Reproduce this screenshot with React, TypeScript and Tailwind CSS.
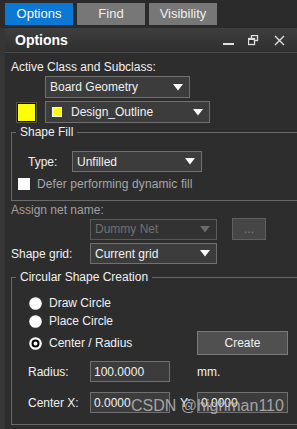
import React from "react";

const font = { fontFamily: '"Liberation Sans", Arial, sans-serif' };

function Arrow({ disabled }: { disabled?: boolean }) {
  return (
    <svg width="10" height="7" viewBox="0 0 10 7" className="shrink-0">
      <polygon points="0,0 10,0 5,6.5" fill={disabled ? "#6a6a6a" : "#ffffff"} />
    </svg>
  );
}

function Dropdown({
  w,
  h = 22,
  text,
  disabled,
  swatch,
}: {
  w: string;
  h?: number;
  text: string;
  disabled?: boolean;
  swatch?: boolean;
}) {
  return (
    <div
      className={`${w} flex items-center justify-between border pl-[4px] pr-[6px] ${
        disabled ? "border-[#5a5a5a] bg-[#323232] text-[#707070]" : "border-[#707070] bg-[#3c3c3c] text-[#f0f0f0]"
      }`}
      style={{ height: h }}
    >
      <div className="flex items-center">
        {swatch && <div className="mr-[9px] ml-[2px] h-[10px] w-[10px] border border-white bg-[#ffff00]" />}
        <span>{text}</span>
      </div>
      <Arrow disabled={disabled} />
    </div>
  );
}

function Radio({ label, checked }: { label: string; checked?: boolean }) {
  return (
    <div className="flex h-[16px] items-center">
      <svg width="13" height="13" viewBox="0 0 13 13" className="ml-[17px] mr-[7px]">
        <circle cx="6.5" cy="6.5" r="6.3" fill="#ffffff" />
        {checked && <circle cx="6.5" cy="6.5" r="3" fill="#ffffff" stroke="#000" strokeWidth="2" />}
      </svg>
      <span className="text-[#f0f0f0]">{label}</span>
    </div>
  );
}

export default function App() {
  return (
    <div className="relative h-[429px] w-[297px] overflow-hidden bg-[#2d2d2d] text-[12px] leading-[16px]" style={font}>
      {/* Tabs */}
      <div className="flex h-[28px] gap-[4px] bg-[#2b2b2b] pl-[5px] pt-[3px]">
        <div className="flex h-[22px] w-[68px] items-center justify-center bg-[#0a78d4] text-[13px] text-white">Options</div>
        <div className="flex h-[22px] w-[68px] items-center justify-center bg-[#777777] text-[13px] text-[#eeeeee]">Find</div>
        <div className="flex h-[22px] w-[68px] items-center justify-center bg-[#777777] text-[13px] text-[#eeeeee]">Visibility</div>
      </div>
      <div className="flex">
        <div className="h-[401px] w-[5px] shrink-0 bg-[#363636]" />
        <div className="flex min-w-0 flex-1 flex-col overflow-hidden">
          {/* Header */}
          <div className="flex h-[25px] items-center justify-between border-b border-[#4a4a4a] bg-gradient-to-b from-[#3e3e3e] to-[#2f2f2f] pl-[10px] pr-[12px]">
            <span className="text-[14px] font-bold text-white">Options</span>
            <div className="flex items-center gap-[13px]">
              <svg width="12" height="12" viewBox="0 0 12 12">
                <rect x="0" y="9" width="11" height="2" fill="#e0e0e0" />
              </svg>
              <svg width="11" height="11" viewBox="0 0 11 11">
                <rect x="3.5" y="0.5" width="6" height="5" fill="none" stroke="#e0e0e0" strokeWidth="1.3" />
                <rect x="0.5" y="3.5" width="6" height="6" fill="#2f2f2f" stroke="#e0e0e0" strokeWidth="1.3" />
                <rect x="0.5" y="3.5" width="6" height="1.5" fill="#e0e0e0" />
              </svg>
              <svg width="11" height="11" viewBox="0 0 11 11" className="ml-[2px]">
                <path d="M1 1 L10 10 M10 1 L1 10" stroke="#e0e0e0" strokeWidth="1.4" />
              </svg>
            </div>
          </div>

          {/* Body */}
          <div className="flex flex-col">
            <div className="mt-[6px] pl-[6px] text-[#f0f0f0]">Active Class and Subclass:</div>
            <div className="mt-[1px] pl-[40px]">
              <Dropdown w="w-[145px]" text="Board Geometry" />
            </div>
            <div className="mt-[3px] flex items-center">
              <div className="ml-[12px] h-[19px] w-[19px] border border-[#111] bg-[#ffff00] outline outline-1 outline-[#555]" />
              <div className="ml-[9px]">
                <Dropdown w="w-[165px]" text="Design_Outline" swatch />
              </div>
            </div>

            <fieldset className="ml-[6px] mt-[1px] w-[300px] border border-[#6a6a6a] pb-[8px]">
              <legend className="ml-[4px] px-[4px] text-[#f0f0f0]">Shape Fill</legend>
              <div className="mt-[11px] flex items-center">
                <span className="ml-[16px] w-[44px] text-[#f0f0f0]">Type:</span>
                <Dropdown w="w-[130px]" h={21} text="Unfilled" />
              </div>
              <div className="mt-[4px] flex items-center">
                <div className="ml-[6px] h-[12px] w-[12px] bg-white" />
                <span className="ml-[7px] tracking-[0.1px] text-[#a8a8a8]">Defer performing dynamic fill</span>
              </div>
            </fieldset>

            <div className="mt-[1px] pl-[6px] text-[#a0a0a0]">Assign net name:</div>
            <div className="flex h-[22px] items-center pl-[85px]">
              <Dropdown w="w-[127px]" h={21} text="Dummy Net" disabled />
              <div className="ml-[15px] flex h-[22px] w-[34px] items-center justify-center border border-[#606060] bg-[#464646] text-[#808080]">
                ...
              </div>
            </div>
            <div className="mt-[3px] flex items-center">
              <span className="ml-[6px] w-[79px] text-[#f0f0f0]">Shape grid:</span>
              <Dropdown w="w-[127px]" h={21} text="Current grid" />
            </div>

            <fieldset className="ml-[6px] mt-[5px] w-[300px] border border-[#6a6a6a] pb-[11px]">
              <legend className="ml-[4px] px-[4px] text-[#f0f0f0]">Circular Shape Creation</legend>
              <div className="mt-[10px]">
                <Radio label="Draw Circle" />
              </div>
              <div className="mt-[2px]">
                <Radio label="Place Circle" />
              </div>
              <div className="mt-[2px] flex h-[24px] items-center">
                <div className="w-[185px]">
                  <Radio label="Center / Radius" checked />
                </div>
                <div className="flex h-[24px] w-[91px] items-center justify-center border border-[#7a7a7a] bg-[#505050] text-[#f0f0f0]">
                  Create
                </div>
              </div>
              <div className="mt-[6px] flex h-[21px] items-center">
                <span className="ml-[16px] w-[62px] text-[#f0f0f0]">Radius:</span>
                <div className="flex h-[21px] w-[80px] items-center border border-[#707070] bg-[#3c3c3c] pl-[3px] text-[#f0f0f0]">
                  100.0000
                </div>
                <span className="ml-[27px] text-[#f0f0f0]">mm.</span>
              </div>
              <div className="mt-[10px] flex h-[21px] items-center">
                <span className="ml-[16px] w-[62px] text-[#f0f0f0]">Center X:</span>
                <div className="flex h-[21px] w-[80px] items-center border border-[#707070] bg-[#3c3c3c] pl-[3px] text-[#f0f0f0]">
                  0.0000
                </div>
                <span className="ml-[10px] w-[17px] text-[#f0f0f0]">Y:</span>
                <div className="flex h-[21px] w-[91px] items-center border border-[#707070] bg-[#3c3c3c] pl-[3px] text-[#f0f0f0]">
                  0.0000
                </div>
              </div>
            </fieldset>
          </div>
        </div>
      </div>

      {/* watermark */}
      <div className="pointer-events-none absolute left-[131px] top-[396px] text-[16px] leading-[20px] text-[#c0c0c0]/80" style={font}>
        CSDN @highman110
      </div>
    </div>
  );
}
